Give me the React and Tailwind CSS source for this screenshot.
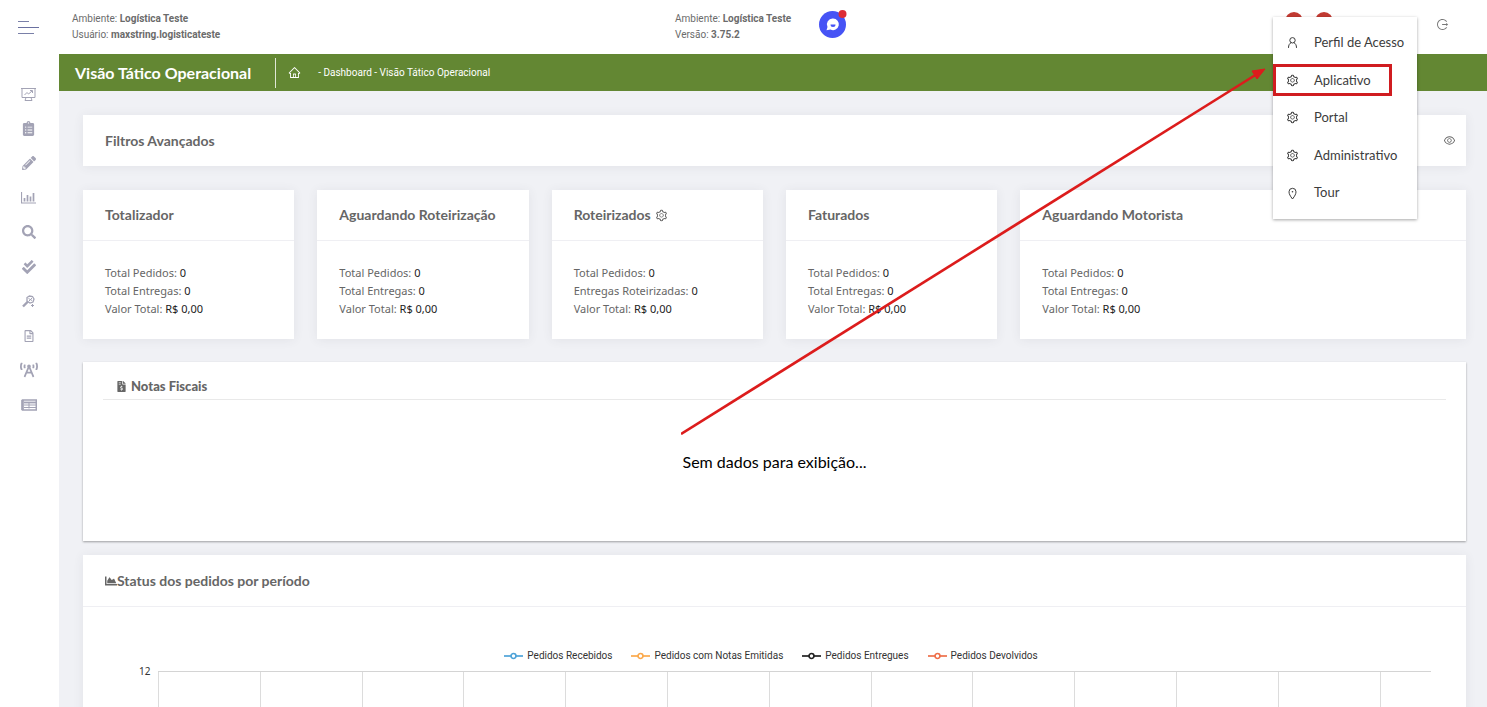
import React from 'react'
import {
  AiOutlineEye,
  AiOutlineHome,
  AiOutlineLogout,
  AiOutlineSetting,
} from 'react-icons/ai'
import {
  FaBroadcastTower,
  FaChartArea,
  FaCheckDouble,
  FaClipboardList,
  FaFileInvoiceDollar,
  FaPencilAlt,
  FaRegFileAlt,
  FaSearch,
} from 'react-icons/fa'

const EaselIcon = () => (
  <svg width="15" height="14" viewBox="0 0 15 14" fill="none" stroke="currentColor">
    <path d="M0 1.5h15M1 1.5v9h13v-9M4 13.5h7M5 10.5l-1 3M10 10.5l1 3" />
    <path d="M3.5 8l2.5-2.5 1.5 1.5L11 4M9 3.5h2.5V6" />
  </svg>
)

const BarsIcon = () => (
  <svg width="15" height="13" viewBox="0 0 15 13" fill="none" stroke="currentColor">
    <path d="M.5 1v11H15" strokeWidth="1.2" />
    <path d="M3.5 7v3.5M6.5 4v6.5M9.5 5.5v5M12.5 2v8.5" strokeWidth="1.7" />
  </svg>
)

const WandIcon = () => (
  <svg width="13" height="13" viewBox="0 0 13 13" fill="none" stroke="currentColor">
    <path d="M1 11.5l5-5" strokeWidth="2.4" />
    <path d="M5 2.5L7.5 1l3 .5L12 4l-1 3-3 1-3-2z" strokeWidth="1.3" />
    <path d="M6.5 3.5l3.5 2M7 6l3-3M10.5 9v3M9 10.5h3" />
  </svg>
)

const TableIcon = () => (
  <svg width="16" height="12" viewBox="0 0 16 12" fill="none" stroke="currentColor">
    <path d="M1.5 1h13.8v10H1.500z" strokeWidth="1.5" />
    <path d="M1.5 1v10" strokeWidth="2.6" />
    <path d="M3 3.5h12" strokeWidth="1.8" />
    <path d="M3 6h12M3 8.5h12" strokeWidth="1.2" />
    <path d="M8 3.500v6" />
  </svg>
)

const UserIcon = () => (
  <svg width="13" height="13" viewBox="0 0 13 13" fill="none" stroke="currentColor">
    <circle cx="6.500" cy="4.300" r="2.700" />
    <path d="M2.500 11.500c0-2.500 1-4 2.500-4.800M10.500 11.500c0-2.500-1-4-2.500-4.800" strokeLinecap="round" />
  </svg>
)

const PinIcon = () => (
  <svg width="13" height="13" viewBox="0 0 13 13" fill="none" stroke="currentColor">
    <path d="M6.500 12C4 8.800 3 6.800 3 4.800a3.500 3.500 0 0 1 7 0c0 2-1 4-3.500 7.200z" />
    <circle cx="6.500" cy="4.800" r=".8" fill="currentColor" stroke="none" />
  </svg>
)

const GearIcon = () => <AiOutlineSetting size={13} />

const menuIcons = [
  { label: 'Painel', icon: <EaselIcon /> },
  { label: 'Pedidos', icon: <FaClipboardList size={15} /> },
  { label: 'Edição', icon: <FaPencilAlt size={14} /> },
  { label: 'Indicadores', icon: <BarsIcon /> },
  { label: 'Consulta', icon: <FaSearch size={14} /> },
  { label: 'Conferência', icon: <FaCheckDouble size={14} /> },
  { label: 'Ferramentas', icon: <WandIcon /> },
  { label: 'Relatórios', icon: <FaRegFileAlt size={12} /> },
  { label: 'Monitoramento', icon: <FaBroadcastTower size={18} /> },
  { label: 'Tabelas', icon: <TableIcon /> },
]

const cards = [
  { title: 'Totalizador', second: 'Total Entregas:' },
  { title: 'Aguardando Roteirização', second: 'Total Entregas:' },
  { title: 'Roteirizados', second: 'Entregas Roteirizadas:', config: true },
  { title: 'Faturados', second: 'Total Entregas:' },
  { title: 'Aguardando Motorista', second: 'Total Entregas:', wide: true },
]

const legend = [
  { label: 'Pedidos Recebidos', color: '#4ea3d8' },
  { label: 'Pedidos com Notas Emitidas', color: '#fba94c' },
  { label: 'Pedidos Entregues', color: '#222222' },
  { label: 'Pedidos Devolvidos', color: '#ee6f4a' },
]

const options = [
  { label: 'Perfil de Acesso', Icon: UserIcon },
  { label: 'Aplicativo', Icon: GearIcon, active: true },
  { label: 'Portal', Icon: GearIcon },
  { label: 'Administrativo', Icon: GearIcon },
  { label: 'Tour', Icon: PinIcon },
]

const Sidebar = () => (
  <nav className="w-[59px] shrink-0 bg-white pt-[23px] pr-0.5">
    <ul className="grid h-[345px] grid-rows-10 text-[#a3a3b5]">
      {menuIcons.map((item) => (
        <li key={item.label} className="flex items-center justify-center">
          <a href="#" aria-label={item.label}>{item.icon}</a>
        </li>
      ))}
    </ul>
  </nav>
)

const Header = () => (
  <header className="flex h-[54px] items-center bg-white font-['Roboto',sans-serif] text-[10px] leading-4 text-[#6b6b6b]">
    <button aria-label="Menu" className="flex w-[72px] shrink-0 flex-col gap-[5px] pl-[18px]">
      <span className="h-px w-[11px] bg-[#7a80a8]"></span>
      <span className="h-px w-[21px] bg-[#6a70a0]"></span>
      <span className="h-px w-4 bg-[#7a80a8]"></span>
    </button>
    <div className="w-[603px] shrink-0">
      <p>Ambiente: <b>Logística Teste</b></p>
      <p>Usuário: <b>maxstring.logisticateste</b></p>
    </div>
    <div className="w-36 shrink-0">
      <p>Ambiente: <b>Logística Teste</b></p>
      <p>Versão: <b>3.75.2</b></p>
    </div>
    <button aria-label="Chat" className="-mt-[7px]">
      <svg width="28" height="28" viewBox="0 0 28 28">
        <circle cx="13.500" cy="14.500" r="13.500" fill="#4653f5" />
        <path d="M14 8.500a5.800 5.800 0 1 1-2.500 11l-4 .7 1-3.200A5.800 5.800 0 0 1 14 8.500z" fill="#fff" />
        <path d="M11.500 14.500h5a2.500 2.500 0 0 1-5 0z" fill="#4653f5" />
        <circle cx="23.500" cy="4" r="4" fill="#dc2c36" />
      </svg>
    </button>
    <div className="mt-3 mr-[38px] ml-auto flex h-6 items-center self-start">
      <span className="mr-3 size-[18px] self-start rounded-full bg-[#c23a32]"></span>
      <span className="mr-[103px] size-[18px] self-start rounded-full bg-[#c23a32]"></span>
      <button aria-label="Sair" className="text-[#777]"><AiOutlineLogout size={13} /></button>
    </div>
  </header>
)

const OptionsMenu = () => (
  <div className="absolute top-[17px] right-[70px] z-10 w-36 bg-white py-[7px] font-['Lato',sans-serif] text-[13px] text-[#3c3c3c] shadow-[0_1px_3px_rgba(0,0,0,0.35)]">
    <ul className="grid h-[188px] grid-rows-5">
      {options.map(({ label, Icon, active }) => (
        <li key={label} className="flex items-center">
          <button className={active
            ? 'flex h-8 w-[119px] items-center gap-[15px] border-3 border-[#d01c20] pl-2.5'
            : 'flex h-8 w-full items-center gap-[15px] pl-[13px]'}
          >
            <Icon />
            {label}
          </button>
        </li>
      ))}
    </ul>
  </div>
)

const StatusCard = ({ card }) => (
  <section className={card.wide ? 'col-span-2 bg-white shadow-[0_1px_10px_rgba(69,65,78,0.08)]' : 'bg-white shadow-[0_1px_10px_rgba(69,65,78,0.08)]'}>
    <h2 className="flex h-[51px] items-center gap-1 border-b border-[#efeff3] px-[22px] font-['Lato',sans-serif] text-sm font-bold">
      {card.title}
      {card.config && <GearIcon />}
    </h2>
    <div className="px-[22px] pt-[23px] pb-[21px] text-[11px] leading-[18px]">
      <p>Total Pedidos: <span className="text-[#222]">0</span></p>
      <p>{card.second} <span className="text-[#222]">0</span></p>
      <p>Valor Total: <span className="text-[#222]">R$ 0,00</span></p>
    </div>
  </section>
)

const Chart = () => (
  <div className="pt-10 pr-[35px] pl-[52px]">
    <div className="flex justify-center gap-[19px] pr-6 font-['Roboto',sans-serif] text-[10px] leading-[18px] text-[#333]">
      {legend.map((item) => (
        <div key={item.label} className="flex items-center gap-1">
          <svg width="19" height="8" viewBox="0 0 19 8" fill="#fff" stroke={item.color} strokeWidth="1.700">
            <path d="M0 4h19" />
            <circle cx="9.500" cy="4" r="2.500" />
          </svg>
          {item.label}
        </div>
      ))}
    </div>
    <div className="mt-1.5 flex">
      <span className="-mt-2 w-[23px] shrink-0 pl-1 text-[10px] leading-4 text-[#333]">12</span>
      <div className="flex h-[300px] flex-1 border-t border-[#d4d4d4]">
        {Array.from({ length: 12 }, (_, i) => (
          <div key={i} className="flex-[2] border-l border-[#dcdcdc]"></div>
        ))}
        <div className="flex-1 border-l border-[#dcdcdc]"></div>
      </div>
    </div>
  </div>
)

const App = () => {
  return (
    <div className="relative flex h-screen flex-col overflow-hidden bg-[#f0f1f5] font-['Noto_Sans',sans-serif] text-[#666]">
      <Header />
      <OptionsMenu />

      <div className="flex min-h-0 flex-1">
        <Sidebar />

        <main className="min-w-0 flex-1">
          <div className="flex h-[37px] items-center bg-[#638733] text-white">
            <h1 className="pr-6 pl-4 font-['Lato',sans-serif] text-base font-bold">Visão Tático Operacional</h1>
            <span className="h-[30px] w-px bg-white/80"></span>
            <a href="#" aria-label="Início" className="mr-[17px] ml-3"><AiOutlineHome size={13} /></a>
            <span className="font-['Roboto',sans-serif] text-[10px]">- Dashboard - Visão Tático Operacional</span>
          </div>

          <div className="pt-6 pr-[21px] pl-6">
            <section className="flex h-[51px] items-center justify-between bg-white pr-2.5 pl-[22px] shadow-[0_1px_10px_rgba(69,65,78,0.08)]">
              <h2 className="font-['Lato',sans-serif] text-sm font-bold">Filtros Avançados</h2>
              <button aria-label="Mostrar filtros"><AiOutlineEye size={13} /></button>
            </section>

            <div className="mt-6 grid grid-cols-6 gap-[23px]">
              {cards.map((card) => <StatusCard key={card.title} card={card} />)}
            </div>

            <section className="mt-[23px] h-[179px] bg-white px-5 pt-[14px] shadow-[0_1px_2px_rgba(0,0,0,0.35)]">
              <h2 className="flex items-center gap-1 border-b border-[#e9e9e9] pb-[3px] pl-[13px] font-['Lato',sans-serif] text-[13px] leading-5 font-black">
                <FaFileInvoiceDollar size={11} />
                Notas Fiscais
              </h2>
              <p className="mt-[50px] text-center font-['Lato',sans-serif] text-base text-black">Sem dados para exibição...</p>
            </section>

            <section className="mt-3.5 bg-white shadow-[0_1px_10px_rgba(69,65,78,0.08)]">
              <h2 className="flex h-[52px] items-center border-b border-[#efeff3] px-[22px] font-['Lato',sans-serif] text-sm font-bold">
                <FaChartArea size={12} />
                Status dos pedidos por período
              </h2>
              <Chart />
            </section>
          </div>
        </main>
      </div>

      {/* arrow pointing at the highlighted option */}
      <svg className="pointer-events-none absolute top-[68px] right-[221px] z-20" width="585" height="367" viewBox="0 0 585 367">
        <path d="M0 366L576 6" stroke="#dc1c1c" strokeWidth="2.600" />
        <path d="M584 1l-8 10-5-8z" fill="#dc1c1c" stroke="#dc1c1c" />
      </svg>
    </div>
  )
}

export default App
